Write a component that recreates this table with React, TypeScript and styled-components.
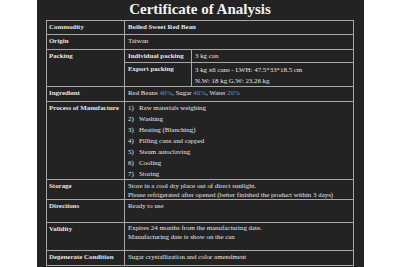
import React from 'react';
import styled, { createGlobalStyle } from 'styled-components';

const GlobalStyle = createGlobalStyle`
  html, body {
    margin: 0;
    padding: 0;
    background: #ffffff;
  }
`;

const steps = [
  'Raw materials weighing',
  'Washing',
  'Heating (Blanching)',
  'Filling cans and capped',
  'Steam autoclaving',
  'Cooling',
  'Storing',
];

const App = () => {
  return (
    <>
      <GlobalStyle />
      <Page>
        <Panel>
          <Title>Certificate of Analysis</Title>
          <Table>
            <colgroup>
              <col style={{ width: 78 }} />
              <col style={{ width: 67 }} />
              <col />
            </colgroup>
            <tbody>
              <Row $h={14}>
                <Label>Commodity</Label>
                <Cell colSpan={2}>
                  <b>Boiled Sweet Red Bean</b>
                </Cell>
              </Row>
              <Row $h={15}>
                <Label>Origin</Label>
                <Cell colSpan={2}>Taiwan</Cell>
              </Row>
              <Row $h={13}>
                <Label rowSpan={2}>Packing</Label>
                <Cell>
                  <b>Individual packing</b>
                </Cell>
                <Cell>3 kg can</Cell>
              </Row>
              <Row $h={22}>
                <Cell>
                  <b>Export packing</b>
                </Cell>
                <Cell $lh={11} $pad={0.5}>
                  <div>3 kg x6 cans - LWH: 47.5*33*18.5 cm</div>
                  <div>N.W: 18 kg G.W: 23.26 kg</div>
                </Cell>
              </Row>
              <Row $h={15}>
                <Label>Ingredient</Label>
                <Cell colSpan={2}>
                  Red Beans <Pct>40%</Pct>, Sugar <Pct>40%</Pct>, Water <Pct>20%</Pct>
                </Cell>
              </Row>
              <Row $h={78}>
                <Label>Process of Manufacture</Label>
                <Cell colSpan={2} $lh={11} $pad={0.5}>
                  <Steps>
                    {steps.map((s, i) => (
                      <Step key={s}>
                        <Num>{i + 1})</Num>
                        {s}
                      </Step>
                    ))}
                  </Steps>
                </Cell>
              </Row>
              <Row $h={19}>
                <Label>Storage</Label>
                <Cell colSpan={2} $lh={9} $pad={0.5}>
                  <div>Store in a cool dry place out of direct sunlight.</div>
                  <div>Please refrigerated after opened (better finished the product within 3 days)</div>
                </Cell>
              </Row>
              <Row $h={23}>
                <Label>Directions</Label>
                <Cell colSpan={2}>Ready to use</Cell>
              </Row>
              <Row $h={28}>
                <Label>Validity</Label>
                <Cell colSpan={2} $lh={9} $pad={0.5}>
                  <div>Expires 24 months from the manufacturing date.</div>
                  <div>Manufacturing date is show on the can</div>
                </Cell>
              </Row>
              <Row $h={15}>
                <Label>Degenerate Condition</Label>
                <Cell colSpan={2}>Sugar crystallization and color amendment</Cell>
              </Row>
            </tbody>
          </Table>
        </Panel>
      </Page>
    </>
  );
};

export default App;

const Page = styled.div`
  display: flex;
  height: 267px;
  overflow: hidden;
`;

const Panel = styled.div`
  margin-left: 37px;
  width: 327px;
  height: 267px;
  box-sizing: border-box;
  padding: 0 10px 0 9px;
  background: #232323;
  color: #e6e6e6;
  font-family: 'Liberation Serif', 'Times New Roman', serif;
`;

const Title = styled.h1`
  margin: 0;
  height: 20px;
  font-size: 15px;
  line-height: 19px;
  font-weight: bold;
  text-align: center;
  color: #f2f2f2;
`;

const Table = styled.table`
  width: 308px;
  border-collapse: collapse;
  table-layout: fixed;
  font-size: 6.9px;
`;

const Row = styled.tr<{ $h: number }>`
  height: ${(p) => p.$h}px;
`;

const Cell = styled.td<{ $lh?: number; $pad?: number }>`
  border: 1px solid #a8a8a8;
  padding: ${(p) => p.$pad ?? 1}px 3px 0 3px;
  line-height: ${(p) => p.$lh ?? 10}px;
  vertical-align: top;
  white-space: nowrap;
  overflow: hidden;

  b {
    font-weight: bold;
  }
`;

const Label = styled(Cell)`
  font-weight: bold;
  padding-left: 2px;
  line-height: 10px;
  padding-top: 1px;
`;

const Pct = styled.span`
  color: #3b9be0;
`;

const Steps = styled.ol`
  margin: 0;
  padding: 0;
  list-style: none;
`;

const Step = styled.li`
  display: flex;
`;

const Num = styled.span`
  width: 11px;
  flex: none;
`;
